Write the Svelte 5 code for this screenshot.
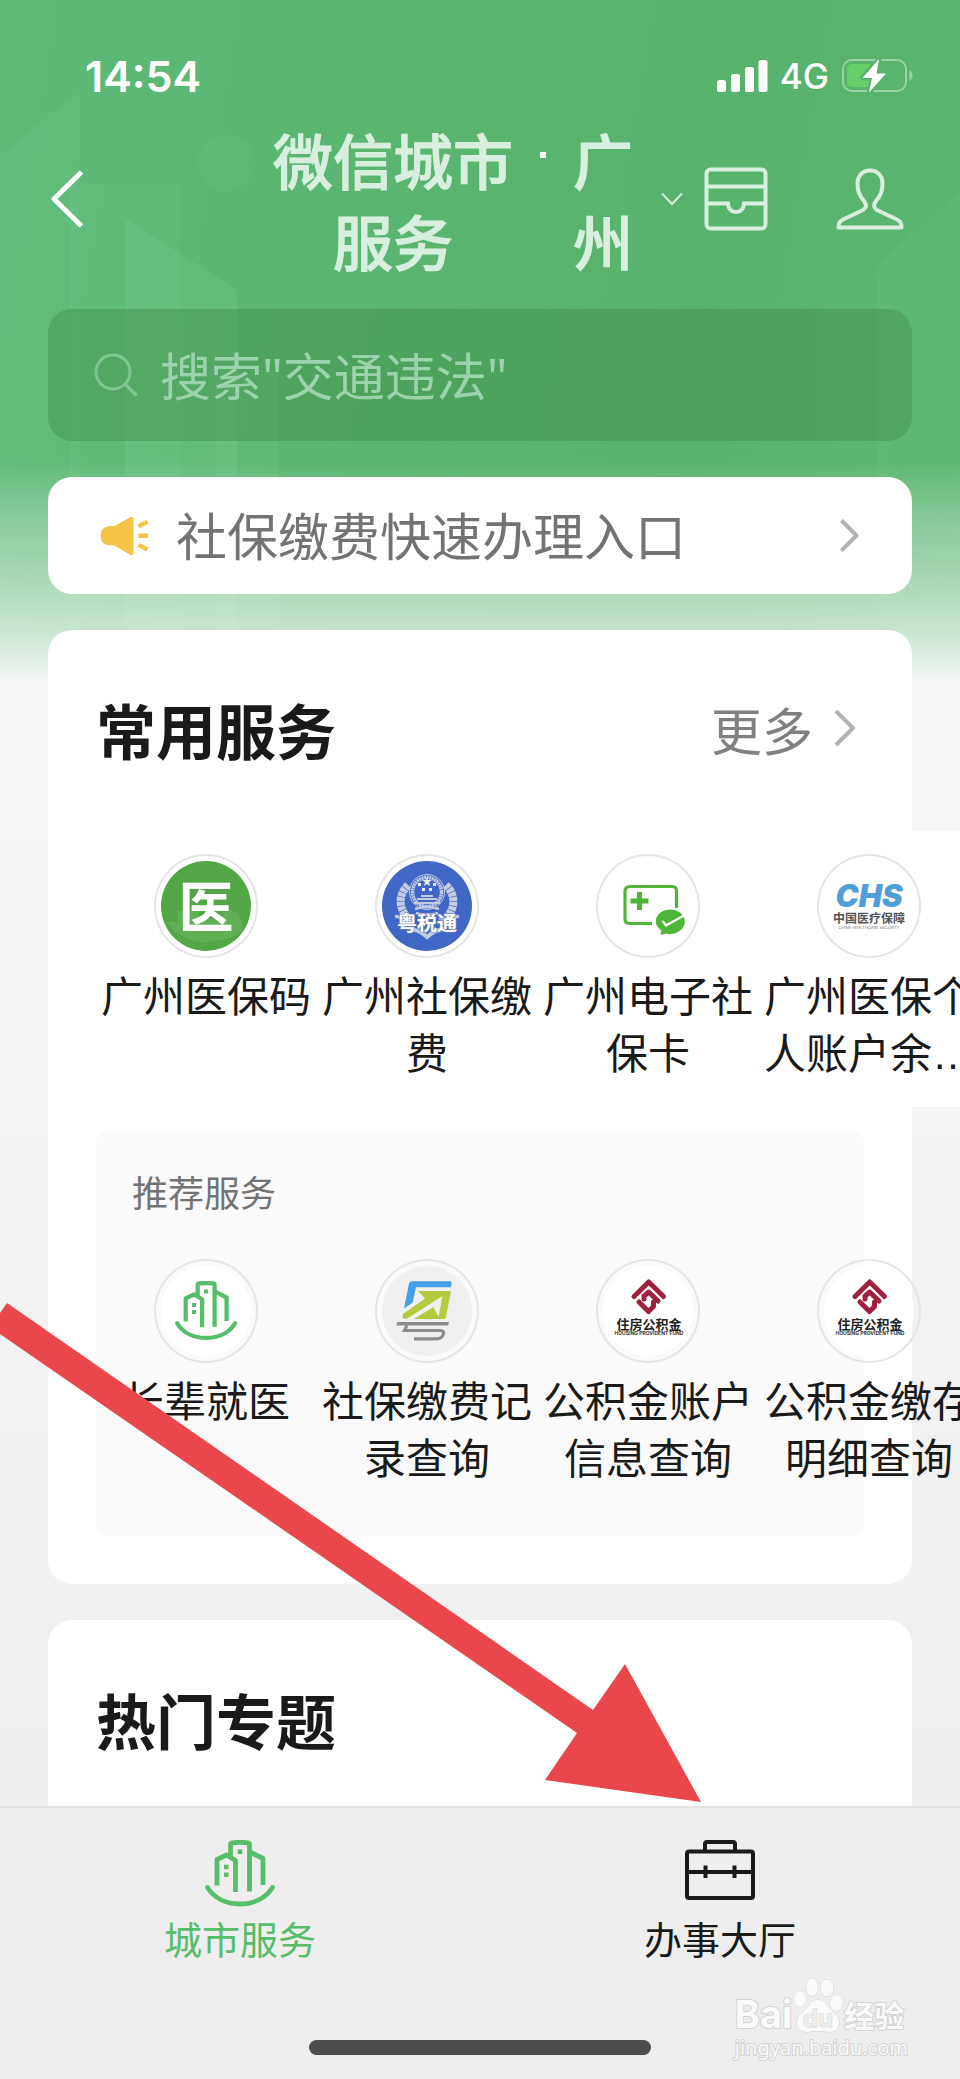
<script lang="ts">
  type Service = { name: string; icon: string };

  const common: Service[] = [
    { name: "广州医保码", icon: "medical" },
    { name: "广州社保缴费", icon: "tax" },
    { name: "广州电子社保卡", icon: "card" },
    { name: "广州医保个人账户余…", icon: "chs" },
  ];
  const recommended: Service[] = [
    { name: "长辈就医", icon: "elder" },
    { name: "社保缴费记录查询", icon: "record" },
    { name: "公积金账户信息查询", icon: "fund" },
    { name: "公积金缴存明细查询", icon: "fund" },
  ];

  let keyword = $state("");
</script>

{#snippet city()}
  <g fill="none" stroke="currentColor" stroke-width="4.8" stroke-linejoin="round">
    <path d="M12 45.5V19.5L21.5 15L30.5 20.5V52" />
    <path d="M25.5 17V4.5Q25.5 3 27 2.8Q35 1.8 43 2.8Q44.5 3 44.5 4.5V51.5" />
    <path d="M45 12L58 18.5V45" />
    <path d="M2.5 47.5C9 58 21 64 35 64S61 58 67.5 47.5" stroke-linecap="round" />
  </g>
  <path d="M32.7 9.5h4.6v4.6h-4.6zM19 24.7h4.6v4.6H19zM19 32.5h4.6v4.6H19z" fill="currentColor" />
{/snippet}

{#snippet logo(icon: string)}
  <svg class="logo" viewBox="0 0 104 104" aria-hidden="true">
    {#if icon === "medical"}
      <circle cx="52" cy="52" r="45" fill="#52a646" />
      <path d="M11 68h13V57h21v8h24v-9h8q9 3 11 11v10q-14 11-36 11q-24 0-40-20z" fill="#6cba64" opacity=".5" />
      <text x="52" y="73" class="cjk" font-size="55" font-weight="700" fill="#fff">医</text>
    {:else if icon === "tax"}
      <circle cx="52" cy="52" r="45" fill="#4067c6" />
      <g fill="none" stroke="#c3cce0">
        <circle cx="52" cy="38" r="17.5" stroke-width="1" />
        <circle cx="52" cy="38" r="14.5" stroke-width="3.5" stroke-dasharray="2 .6" />
        <path d="M33 31C22 42 23 58 38 68M71 31C82 42 81 58 66 68" stroke-width="8" stroke-dasharray="4 .7" />
        <path d="M20 62l11 3-2 8M84 62l-11 3 2 8" stroke-width="3" />
        <path d="M34 75q9 0 18 8q9-8 18-8" stroke-width="4" />
        <path d="M39 49h26M42 45h20M46 42h12" stroke-width="2" />
        <path d="M40 55q12-4 24 0M41 59q11 4 22 0" stroke-width="2.5" />
      </g>
      <path d="M52 23l1 3h4l-3 2 1 4-3-2-3 2 1-4-3-2h4zM43 29h3v3h-3zM58 29h3v3h-3zM47 34h3v3h-3zM54 34h3v3h-3z" fill="#e7ecf5" />
      <text x="52" y="77" class="cjk shade" font-size="20" font-weight="700" fill="#fff">粤税通</text>
    {:else if icon === "card"}
      <g fill="none" stroke="#4fb536" stroke-width="3.2">
        <path d="M80.5 54V37Q80.5 32.5 76 32.5H34Q29 32.5 29 37.5V65Q29 69.5 34 69.5H56" />
        <path d="M43.5 38v18M34.5 47h18" stroke-width="5" />
      </g>
      <path d="M74.3 55.5c8 0 14.5 5.2 14.5 12s-6.5 12.5-14.5 12.5q-2 0-4-.6L64.5 81l.8-4.5q-5.5-4-5.5-9c0-6.8 6.5-12 14.5-12z" fill="#4fb536" />
      <path d="M66.5 67L70 71.5L88 61.5" fill="none" stroke="#fff" stroke-width="2.2" />
    {:else if icon === "chs"}
      <text x="52" y="53" class="latin" font-size="31" font-weight="900" font-style="italic" fill="#4f9ed8">CHS</text>
      <text x="52" y="69" class="cjk" font-size="12" font-weight="700" fill="#555">中国医疗保障</text>
      <text x="52" y="75" class="latin" font-size="4" fill="#777">CHINA HEALTHCARE SECURITY</text>
    {:else if icon === "elder"}
      <circle cx="52" cy="52" r="45" fill="#fff" />
      <g class="green" transform="translate(21 22) scale(.89)">{@render city()}</g>
    {:else if icon === "record"}
      <circle cx="52" cy="52" r="45" fill="#f0f0f0" />
      <path d="M29 49.5L34 24.5Q34.5 22.2 37 22.2H75Q77 22.2 76.7 24.5L76 28.2H41L37.7 43.5z" fill="#479fe5" />
      <path d="M28 55L50 39.5L43 32H76L71 58Q70.5 60 68.5 60H39L58.5 48L63.5 58L67.5 37L31.5 60Q26 60.5 28 55z" fill="#b3cc3f" />
      <path d="M22.3 63H74L73 66.5H21.3z" fill="#8c8c8c" />
      <path d="M32 66L29.5 71.5H65Q70 71.5 68 76Q66.5 79.8 62 79.8H39" fill="none" stroke="#8c8c8c" stroke-width="3.2" />
    {:else}
      <circle cx="52" cy="52" r="45" fill="#fff" />
      <g fill="none" stroke="#9f213d" stroke-width="5" stroke-linejoin="round" stroke-linecap="round">
        <path d="M38 37.5L52.7 23L67.5 37.5" />
        <path d="M48 40V37L52.7 33L62 42" />
        <path d="M43 43L52.5 52.5L57.5 47.5V43" />
      </g>
      <text x="53" y="70" class="cjk" font-size="13" font-weight="700" fill="#222">住房公积金</text>
      <text x="53" y="76" class="latin" font-size="5" font-weight="700" fill="#333">HOUSING PROVIDENT FUND</text>
    {/if}
  </svg>
{/snippet}

{#snippet services(list: Service[])}
  <ul class="services">
    {#each list as item}
      <li>
        <a class="service" href="#service">
          {@render logo(item.icon)}
          <span>{item.name}</span>
        </a>
      </li>
    {/each}
  </ul>
{/snippet}

<div class="page">
  <svg class="skyline" viewBox="0 0 960 684" preserveAspectRatio="none" aria-hidden="true">
    <g fill="#8fe0b0">
      <path d="M0 155L79 92V684H0z" opacity=".08" />
      <path d="M70 183H181V684H70z" opacity=".08" />
      <path d="M125 218L232 287Q237 290 237 296V684H125z" opacity=".13" />
      <path d="M216 370H278V684H216z" opacity=".1" />
      <circle cx="226" cy="163" r="29" opacity=".07" />
      <path d="M960 190L881 264Q877 268 877 274V684H960z" opacity=".08" />
      <path d="M816 278H890V684H816z" opacity=".05" />
    </g>
  </svg>
  <div class="fade"></div>

  <div class="status">
    <span class="time">14:54</span>
    <svg width="51" height="32" viewBox="0 0 51 32" fill="#fff" aria-hidden="true">
      <rect y="20" width="9" height="12" rx="2.5" />
      <rect x="14" y="14" width="9" height="18" rx="2.5" />
      <rect x="28" y="7" width="9" height="25" rx="2.5" />
      <rect x="41.5" width="9" height="32" rx="2.5" />
    </svg>
    <span class="network">4G</span>
    <svg width="71" height="36" viewBox="0 0 71 36" aria-hidden="true">
      <rect x="1" y="2" width="63" height="31" rx="9" fill="none" stroke="#fff" stroke-width="2" opacity=".4" />
      <path d="M67.5 12.5q3 1 3 5t-3 5z" fill="#fff" opacity=".4" />
      <rect x="5" y="6" width="26" height="23" rx="5" fill="#67cf6a" />
      <path d="M37 1L20.5 20h9.5L27 34.5L44 15.5h-9.5z" fill="#fff" stroke="#58b370" stroke-width="5" stroke-linejoin="round" />
      <path d="M37 1L20.5 20h9.5L27 34.5L44 15.5h-9.5z" fill="#fff" />
    </svg>
  </div>

  <header class="nav">
    <button class="back" aria-label="返回">
      <svg width="34" height="58" viewBox="0 0 34 58" fill="none" stroke="#fff" stroke-width="5" stroke-linejoin="round">
        <path d="M31.5 2L4 29L31.5 56" />
      </svg>
    </button>
    <h1>微信城市服务</h1>
    <i class="dot"></i>
    <button class="place">
      <span>广州</span>
      <svg width="22" height="14" viewBox="0 0 22 14" fill="none" stroke="currentColor" stroke-width="2">
        <path d="M1 1.5L11 12L21 1.5" />
      </svg>
    </button>
    <button class="inbox" aria-label="卡包">
      <svg width="64" height="64" viewBox="0 0 64 64" fill="none" stroke="currentColor" stroke-width="4">
        <rect x="2.5" y="2.5" width="59" height="59" rx="4" />
        <path d="M2 19.5H62M2 36.5H24Q24.5 45 32 45T40 36.5H62" />
      </svg>
    </button>
    <button class="person" aria-label="我的">
      <svg width="68" height="62" viewBox="0 0 68 62" fill="none" stroke="currentColor" stroke-width="4" stroke-linejoin="round">
        <path d="M34 2.5C26 2.5 21.5 8.5 21.5 15C21.5 23 23 27 28 33C31 37 30.5 40 27 42L7 51.5C3 53.5 2.5 55.5 2.5 59.5H65.5C65.5 55.5 65 53.5 61 51.5L41 42C37.5 40 37 37 40 33C45 27 46.5 23 46.5 15C46.5 8.5 42 2.5 34 2.5z" />
      </svg>
    </button>
  </header>

  <main>
    <label class="search">
      <svg width="44" height="44" viewBox="0 0 44 44" fill="none" stroke="currentColor" stroke-width="3">
        <circle cx="19" cy="19" r="17" />
        <path d="M31 31L42.5 42.5" stroke-width="3.6" />
      </svg>
      <input type="search" aria-label="搜索" placeholder={'搜索"交通违法"'} bind:value={keyword} />
    </label>

    <a class="notice" href="#notice">
      <svg width="49" height="40" viewBox="0 0 49 40" fill="#f6c445" aria-hidden="true">
        <path d="M10 10h4.5L30.5 1Q33.5 0 33.5 3V37Q33.5 40 30.5 39L14.5 29.5H10Q.5 28.5.5 19.8T10 10z" />
        <path d="M37.5 8.5l9-4.8 2 3.8-9 4.8zM38.5 17.5h9.5v4.6h-9.5zM39.5 27l9 4.8-2 3.8-9-4.8z" />
      </svg>
      <span>社保缴费快速办理入口</span>
      <svg class="arrow" width="19" height="33" viewBox="0 0 19 33">
        <path d="M1.5 1.5L16.5 16.5L1.5 31.5" />
      </svg>
    </a>

    <section class="card">
      <div class="card-head">
        <h2>常用服务</h2>
        <a class="more" href="#more">
          更多
          <svg class="arrow" width="22" height="38" viewBox="0 0 22 38">
            <path d="M2 1L19 18L2 35" />
          </svg>
        </a>
      </div>
      <div class="strip">{@render services(common)}</div>
      <div class="recommend">
        <h3>推荐服务</h3>
        {@render services(recommended)}
      </div>
    </section>

    <section class="card topics">
      <h2>热门专题</h2>
    </section>
  </main>

  <footer>
    <nav class="tabs">
      <a class="green" href="#city">
        <svg width="70" height="67" viewBox="0 0 70 67" aria-hidden="true">{@render city()}</svg>
        城市服务
      </a>
      <a href="#hall">
        <svg width="70" height="67" viewBox="0 0 70 67" fill="none" stroke="currentColor" stroke-width="4" aria-hidden="true">
          <rect x="2" y="11.5" width="66" height="46.5" rx="2" />
          <path d="M20 11V4Q20 2 22 2H48Q50 2 50 4V11M2 32H68M20.5 25.5V38M49.5 25.5V38" />
        </svg>
        办事大厅
      </a>
    </nav>
    <div class="home-bar"></div>
  </footer>

  <svg class="pointer" width="720" height="520" viewBox="0 0 720 520" aria-hidden="true">
    <path d="M7 13L593 420L625 374L701 512L545 490L577 443L-10 37z" fill="#e9474c" />
  </svg>

  <div class="watermark" aria-hidden="true">
    <div class="brand">
      <span>Bai</span>
      <svg width="52" height="58" viewBox="0 0 52 58" fill="#fafafa" stroke="#d3d3d3" stroke-width="1">
        <ellipse cx="8" cy="22" rx="6" ry="8" />
        <ellipse cx="20" cy="10" rx="6" ry="9" />
        <ellipse cx="35" cy="11" rx="6.5" ry="8.5" />
        <ellipse cx="44.5" cy="26" rx="6.5" ry="8" />
        <path d="M26 23C18 23 16 31 10 36C1 44 4 55 15 55Q26 53 37 55C48 55 51 44 42 36C36 31 34 23 26 23z" />
        <text x="26" y="50" class="latin" font-size="24" fill="#eee">du</text>
      </svg>
      <span class="jy">经验</span>
    </div>
    <div class="site">jingyan.baidu.com</div>
  </div>
</div>

<style>
  :global(body) {
    margin: 0;
    color: #1a1a1a;
  }
  .page {
    position: relative;
    display: flex;
    flex-direction: column;
    min-height: 100vh;
    overflow: hidden;
    font-family: "Noto Sans CJK SC", sans-serif;
    background:
      linear-gradient(100deg, #5fba7a 0, #59b56f 40%, #57b26c 70%, #5bb672 100%) top / 100% 684px no-repeat,
      linear-gradient(#f7f7f7 684px, #efeff0 1800px);
  }
  .skyline {
    position: absolute;
    top: 0;
    left: 0;
    width: 100%;
    height: 684px;
  }
  .fade {
    position: absolute;
    top: 460px;
    left: 0;
    width: 100%;
    height: 224px;
    background: linear-gradient(#f7f7f700, #f7f7f740 25%, #f7f7f780 55%, #f7f7f7b3 77%, #f7f7f7);
  }
  .status,
  .nav,
  main,
  footer {
    position: relative;
  }
  h1,
  h2,
  h3,
  ul {
    margin: 0;
    padding: 0;
  }
  a {
    color: inherit;
    text-decoration: none;
  }
  button {
    display: flex;
    align-items: center;
    border: 0;
    padding: 0;
    background: none;
    font: inherit;
    color: inherit;
  }
  svg {
    display: block;
    flex: none;
  }

  .status {
    display: flex;
    align-items: center;
    height: 48px;
    padding: 52px 47px 18px 85px;
    font-family: Inter, sans-serif;
    color: #fff;
  }
  .time {
    margin-right: auto;
    font-size: 43px;
    font-weight: 600;
  }
  .network {
    margin: 0 13px 0 12px;
    font-size: 35px;
    font-weight: 500;
  }

  .nav {
    display: flex;
    align-items: center;
    padding: 0 56px 0 50px;
    font-size: 60px;
    line-height: 81px;
    font-weight: 500;
    color: #d8efe0;
  }
  .back {
    margin-right: auto;
  }
  h1 {
    width: 240px;
    font-size: 60px;
    font-weight: 500;
    text-align: center;
  }
  h1,
  .place span {
    -webkit-text-stroke: 1px currentColor;
  }
  .dot {
    align-self: flex-start;
    width: 6px;
    height: 6px;
    margin: 34px 27px 0 27px;
    background: #fff;
  }
  .place {
    gap: 28px;
  }
  .place span {
    width: 60px;
  }
  .inbox {
    margin: 0 68px 0 21px;
  }

  main {
    display: flex;
    flex: 1;
    flex-direction: column;
    gap: 36px;
    padding: 29px 48px 0;
  }
  .search {
    display: flex;
    align-items: center;
    gap: 22px;
    height: 132px;
    padding: 0 46px;
    border-radius: 24px;
    background: #3c8a4366;
    color: #7fc595;
  }
  .search input {
    flex: 1;
    min-width: 0;
    border: 0;
    padding: 2px 0 0;
    outline: 0;
    background: none;
    font-family: "Noto Sans", "Noto Sans CJK SC", sans-serif;
    font-size: 51px;
    color: #fff;
  }
  .search input::placeholder {
    color: #9bd3ae;
    opacity: 1;
  }
  .notice {
    display: flex;
    align-items: center;
    gap: 27px;
    height: 117px;
    padding: 0 53px 0 52px;
    border-radius: 24px;
    background: #fff;
    font-size: 51px;
    color: #737373;
  }
  .notice span {
    flex: 1;
    padding-bottom: 4px;
  }
  .arrow {
    fill: none;
    stroke: #b2b2b2;
    stroke-width: 4;
    stroke-linejoin: round;
  }

  .card {
    padding: 59px 48px 48px;
    border-radius: 24px;
    background: #fff;
  }
  .card-head {
    display: flex;
    align-items: center;
    justify-content: space-between;
    margin-bottom: 62px;
  }
  h2 {
    font-size: 60px;
    line-height: 80px;
    font-weight: 700;
  }
  .more {
    display: flex;
    align-items: center;
    gap: 21px;
    margin-right: 8px;
    font-size: 51px;
    line-height: 80px;
    color: #808080;
  }
  .strip {
    margin-right: -96px;
    background: #fff;
  }
  .services {
    display: flex;
    gap: 1px;
    padding: 23px 0 24px;
    list-style: none;
  }
  .services li {
    flex: none;
    width: 220px;
  }
  .service {
    display: flex;
    flex-direction: column;
    align-items: center;
    gap: 11px;
  }
  .service span {
    width: 212px;
    height: 114px;
    font-family: "Liberation Sans", "Noto Sans CJK SC", sans-serif;
    font-size: 42px;
    line-height: 57px;
    text-align: center;
    word-break: break-all;
  }
  .logo {
    width: 104px;
    height: 104px;
    border-radius: 50%;
    box-shadow: inset 0 0 0 2px #e5e5e5;
  }
  .cjk {
    font-family: "Noto Sans CJK SC", sans-serif;
    text-anchor: middle;
  }
  .latin {
    font-family: Inter, sans-serif;
    text-anchor: middle;
  }
  .shade {
    paint-order: stroke;
    stroke: #7181a8;
    stroke-width: 1px;
  }
  .green {
    color: #57bd6a;
  }
  .recommend {
    margin-top: 24px;
    padding: 36px 0 24px;
    border-radius: 12px;
    background: #fafafa;
  }
  h3 {
    margin: 0 36px 21px;
    font-size: 36px;
    line-height: 48px;
    font-weight: 400;
    color: #737373;
  }
  .topics {
    flex: 1;
    padding-bottom: 47px;
    border-radius: 24px 24px 0 0;
  }

  footer {
    padding-bottom: 24px;
    border-top: 2px solid #e2e2e2;
    background: #eee;
  }
  .tabs {
    display: flex;
    padding: 32px 0 76px;
  }
  .tabs a {
    display: flex;
    flex: 1;
    flex-direction: column;
    align-items: center;
    gap: 5px;
    font-size: 38px;
    line-height: 52px;
  }
  .home-bar {
    width: 342px;
    height: 15px;
    margin: 0 auto;
    border-radius: 8px;
    background: #4d4d4d;
  }

  .pointer {
    position: absolute;
    top: 1290px;
    left: 0;
  }
  .watermark {
    position: absolute;
    right: 52px;
    bottom: 18px;
    color: #fafafa;
    paint-order: stroke;
    -webkit-text-stroke: 2px #d3d3d3;
  }
  .brand {
    display: flex;
    align-items: flex-end;
    font-family: Inter, sans-serif;
    font-size: 38px;
    line-height: 42px;
    font-weight: 700;
  }
  .jy {
    font-family: "Noto Sans CJK SC", sans-serif;
    font-size: 30px;
  }
  .site {
    font-family: "Noto Sans", sans-serif;
    font-size: 20px;
    line-height: 26px;
  }
</style>
